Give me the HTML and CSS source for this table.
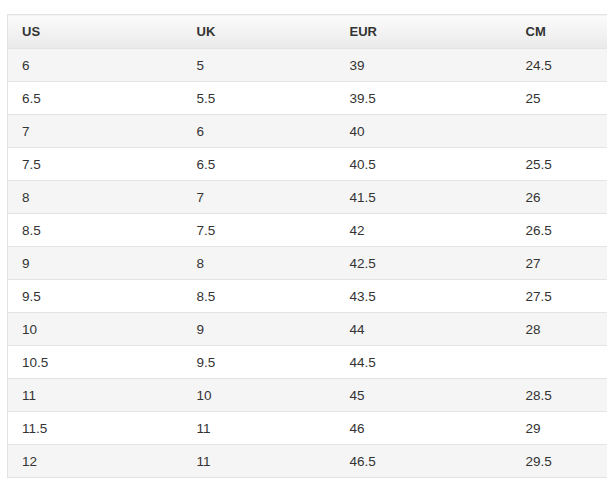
FILE: index.html
```html
<!DOCTYPE html>
<html>
<head>
<meta charset="utf-8">
<link rel="stylesheet" href="styles.css">
</head>
<body>
<table class="size-table">
  <colgroup>
    <col class="c1"><col class="c2"><col class="c3"><col class="c4">
  </colgroup>
  <thead>
    <tr><th>US</th><th>UK</th><th>EUR</th><th>CM</th></tr>
  </thead>
  <tbody>
    <tr><td>6</td><td>5</td><td>39</td><td>24.5</td></tr>
    <tr><td>6.5</td><td>5.5</td><td>39.5</td><td>25</td></tr>
    <tr><td>7</td><td>6</td><td>40</td><td></td></tr>
    <tr><td>7.5</td><td>6.5</td><td>40.5</td><td>25.5</td></tr>
    <tr><td>8</td><td>7</td><td>41.5</td><td>26</td></tr>
    <tr><td>8.5</td><td>7.5</td><td>42</td><td>26.5</td></tr>
    <tr><td>9</td><td>8</td><td>42.5</td><td>27</td></tr>
    <tr><td>9.5</td><td>8.5</td><td>43.5</td><td>27.5</td></tr>
    <tr><td>10</td><td>9</td><td>44</td><td>28</td></tr>
    <tr><td>10.5</td><td>9.5</td><td>44.5</td><td></td></tr>
    <tr><td>11</td><td>10</td><td>45</td><td>28.5</td></tr>
    <tr><td>11.5</td><td>11</td><td>46</td><td>29</td></tr>
    <tr><td>12</td><td>11</td><td>46.5</td><td>29.5</td></tr>
  </tbody>
</table>
</body>
</html>
```
FILE: styles.css
```css
html, body {
  margin: 0;
  background: #ffffff;
}
body {
  padding: 14px 0 0 7px;
  font-family: "Liberation Sans", Arial, sans-serif;
  color: #333333;
  overflow: hidden;
}
.size-table {
  border-collapse: collapse;
  table-layout: fixed;
  width: 600px;
  border-top: 1px solid #e3e3e3;
  border-left: 1px solid #e3e3e3;
}
.c1 { width: 175px; }
.c2 { width: 153px; }
.c3 { width: 176px; }
.c4 { width: 96px; }
.size-table th {
  height: 33px;
  padding: 0 0 0 14px;
  text-align: left;
  font-size: 13px;
  font-weight: bold;
  color: #333333;
  background: linear-gradient(to bottom, #fbfbfb 0%, #efefef 70%, #e9e9e9 100%);
  border-bottom: 1px solid #e3e3e3;
}
.size-table td {
  height: 32px;
  padding: 0 0 0 14px;
  font-size: 13.5px;
  color: #333333;
  border-bottom: 1px solid #e3e3e3;
}
.size-table tbody tr:nth-child(odd) td {
  background: #f5f5f5;
}
.size-table tbody tr:nth-child(even) td {
  background: #ffffff;
}
```
